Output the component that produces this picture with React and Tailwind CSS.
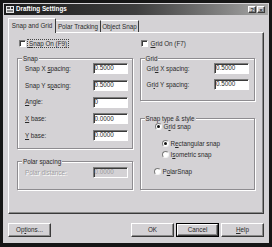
import React from "react";

const raised =
  "border border-t-white border-l-white border-r-[#3a3a3a] border-b-[#3a3a3a] shadow-[inset_-1px_-1px_0_#8a8a8a]";
const sunken =
  "border border-t-[#7c7c7c] border-l-[#7c7c7c] border-r-white border-b-white shadow-[inset_1px_1px_0_#3a3a3a]";
const etched =
  "border border-[#8e8c90] shadow-[inset_1px_1px_0_#ffffff,1px_1px_0_#ffffff]";

const U = ({ children }) => <span className="underline underline-offset-[1px]">{children}</span>;

function Field({ value, disabled }) {
  return (
    <div
      className={`w-[35px] h-[11px] flex items-center pl-[1px] leading-none ${sunken} ${
        disabled ? "bg-[#d4d2d5] text-[#9c9a9e]" : "bg-white text-[#262626]"
      }`}
    >
      {value}
    </div>
  );
}

function Row({ label, value, disabled }) {
  return (
    <div className="flex items-center justify-between h-[11px]">
      <span className={disabled ? "text-[#a09ea2] [text-shadow:1px_1px_0_#fff]" : ""}>{label}</span>
      <Field value={value} disabled={disabled} />
    </div>
  );
}

function Group({ title, className, children, inner }) {
  return (
    <fieldset className={`min-w-0 ${etched} ${className}`}>
      <legend className="ml-[4px] px-[1px] leading-[7px] bg-[#d4d2d5]">{title}</legend>
      <div className={inner}>{children}</div>
    </fieldset>
  );
}

function Check({ children, focus }) {
  return (
    <div className="flex items-center h-[8px] gap-[2px]">
      <div className={`w-[7px] h-[7px] bg-white ${sunken}`} />
      <span
        className={`leading-[7px] px-[1px] ${focus ? "outline outline-1 outline-dotted outline-[#444]" : ""}`}
      >
        {children}
      </span>
    </div>
  );
}

function Radio({ label, checked, className }) {
  return (
    <div className={`flex items-center h-[7px] gap-[2px] ${className}`}>
      <div className="w-[7px] h-[7px] rounded-full bg-white border border-t-[#7a7a7a] border-l-[#7a7a7a] border-r-[#f4f4f4] border-b-[#f4f4f4] flex items-center justify-center">
        {checked && <div className="w-[3px] h-[3px] rounded-full bg-[#111]" />}
      </div>
      <span className="leading-[7px]">{label}</span>
    </div>
  );
}

function Button({ children, isDefault }) {
  return (
    <div className={`w-[43px] h-[14px] ${isDefault ? "border border-black" : ""}`}>
      <div className={`w-full h-full flex items-center justify-center bg-[#d4d2d5] ${raised}`}>
        {children}
      </div>
    </div>
  );
}

export default function App() {
  return (
    <div className="w-[272px] h-[247px] bg-[#161616] p-[3px] pb-[4px] font-['Liberation_Sans',Arial,sans-serif] text-[6.3px] text-[#2a2a2a]">
      <div className="w-full h-full bg-[#d4d2d5] flex flex-col">
        {/* title bar */}
        <div className="mt-[1px] mx-[1px] h-[11px] flex items-center pl-[2px] pr-[3px] bg-linear-to-r from-[#1c1c1c] via-[#3e3e3e] to-[#a8a8a8]">
          <svg width="8" height="7" viewBox="0 0 8 7" className="mr-[2px]">
            <rect x="0" y="0" width="8" height="7" fill="#e8e8e8" />
            <rect x="1" y="1" width="3" height="2" fill="#555" />
            <rect x="1" y="4" width="6" height="2" fill="#888" />
            <rect x="5" y="1" width="2" height="2" fill="#333" />
          </svg>
          <span className="text-white font-bold leading-none">Drafting Settings</span>
          <div className="ml-auto flex gap-[1px]">
            <div className={`w-[8px] h-[7px] bg-[#cfcdd0] flex items-center justify-center text-[6px] font-bold leading-none ${raised}`}>?</div>
            <div className={`w-[8px] h-[7px] bg-[#cfcdd0] flex items-center justify-center text-[6px] font-bold leading-none ${raised}`}>×</div>
          </div>
        </div>

        {/* tabs */}
        <div className="mt-[3px] mx-[5px] flex items-end h-[14px]">
          <div className="relative z-10 -mb-[1px] w-[48px] h-[15px] flex items-center justify-center border-t border-l border-t-white border-l-white border-r border-r-[#3a3a3a] bg-[#d4d2d5] rounded-t-[1px]">
            Snap and Grid
          </div>
          <div className="w-[45px] h-[12px] flex items-center justify-center border-t border-t-white border-r border-r-[#3a3a3a]">
            Polar Tracking
          </div>
          <div className="w-[38px] h-[12px] flex items-center justify-center border-t border-t-white border-r border-r-[#3a3a3a]">
            Object Snap
          </div>
        </div>

        {/* tab panel */}
        <div className="mx-[5px] h-[182px] border border-t-white border-l-white border-r-[#3a3a3a] border-b-[#3a3a3a] shadow-[inset_-1px_-1px_0_#8a8a8a] px-[8px] pt-[6px]">
          <div className="grid grid-cols-2 gap-x-[7px]">
            <div className="pl-[2px]">
              <Check focus>
                <U>S</U>nap On (F9)
              </Check>
            </div>
            <div className="pl-[1px]">
              <Check>
                <U>G</U>rid On (F7)
              </Check>
            </div>
          </div>

          <div className="mt-[8px] grid grid-cols-2 gap-x-[7px]">
            <div className="flex flex-col gap-[9px]">
              <Group title="Snap" className="h-[94px]" inner="pt-[1px] pl-[7px] pr-[4px] flex flex-col gap-[5.75px]">
                <Row label={<>Snap X <U>s</U>pacing:</>} value="0.5000" />
                <Row label={<>Snap Y s<U>p</U>acing:</>} value="0.5000" />
                <Row label={<><U>A</U>ngle:</>} value="0" />
                <Row label={<><U>X</U> base:</>} value="0.0000" />
                <Row label={<><U>Y</U> base:</>} value="0.0000" />
              </Group>
              <Group title="Polar spacing" className="h-[32px]" inner="pt-[2px] pl-[7px] pr-[4px]">
                <Row label="Polar distance:" value="0.0000" disabled />
              </Group>
            </div>

            <div className="flex flex-col gap-[14px]">
              <Group title="Grid" className="h-[46px]" inner="pt-[1px] pl-[6px] pr-[5px] flex flex-col gap-[5px]">
                <Row label={<>Gri<U>d</U> X spacing:</>} value="0.5000" />
                <Row label={<>Gr<U>i</U>d Y spacing:</>} value="0.5000" />
              </Group>
              <Group title="Snap type & style" className="h-[75px]" inner="pt-[1px] flex flex-col">
                <Radio className="ml-[14px]" label={<>G<U>r</U>id snap</>} checked />
                <Radio className="ml-[21px] mt-[10px]" label={<>R<U>e</U>ctangular snap</>} checked />
                <Radio className="ml-[21px] mt-[4px]" label={<>I<U>s</U>ometric snap</>} />
                <Radio className="ml-[13px] mt-[10px]" label={<>P<U>o</U>larSnap</>} />
              </Group>
            </div>
          </div>
        </div>

        {/* buttons */}
        <div className="mt-[9px] mx-[5px] flex items-center gap-[2px]">
          <Button>
            Op<U>t</U>ions...
          </Button>
          <div className="flex-1" />
          <Button>OK</Button>
          <Button isDefault>Cancel</Button>
          <Button>
            <U>H</U>elp
          </Button>
        </div>
      </div>
    </div>
  );
}
